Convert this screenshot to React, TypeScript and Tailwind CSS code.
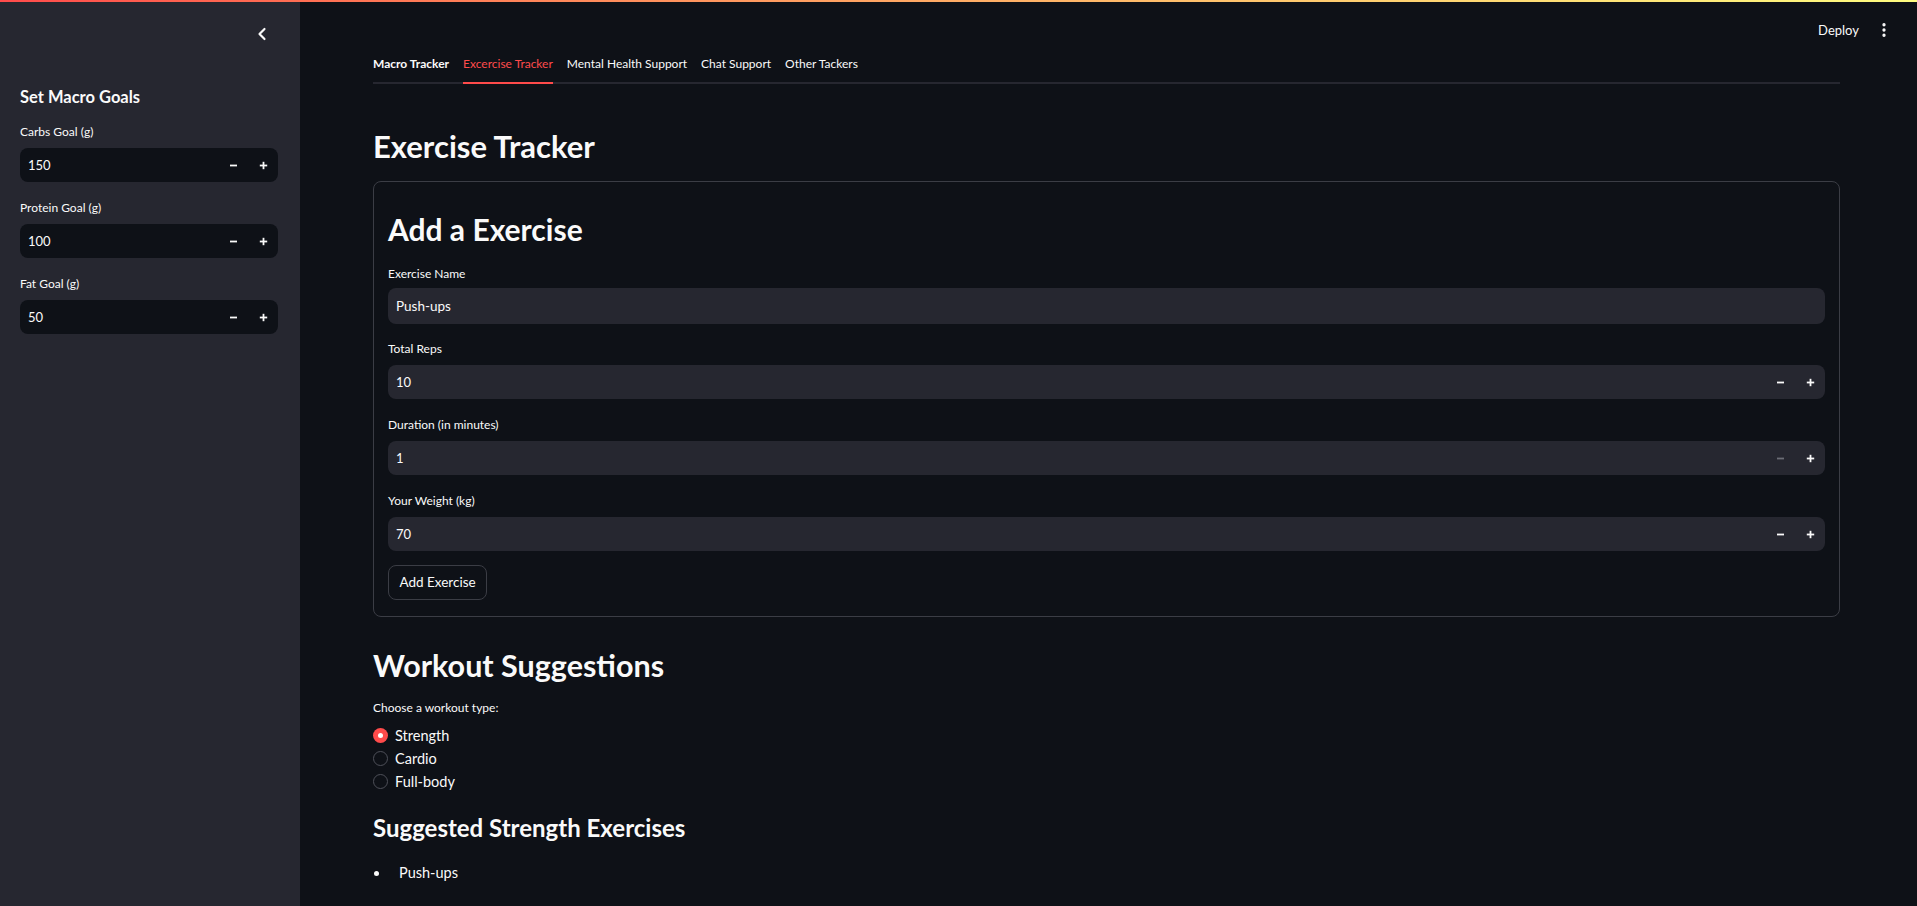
import React from "react";

const FONT = { fontFamily: "Lato, 'Noto Sans', sans-serif" };

function Minus({ dim }: { dim?: boolean }) {
  return (
    <svg width="9" height="9" viewBox="0 0 9 9">
      <line x1="1" y1="4.5" x2="8" y2="4.5" stroke={dim ? "#6b6d75" : "#fafafa"} strokeWidth="1.8" />
    </svg>
  );
}
function Plus() {
  return (
    <svg width="9" height="9" viewBox="0 0 9 9">
      <line x1="0.8" y1="4.5" x2="8.2" y2="4.5" stroke="#fafafa" strokeWidth="1.8" />
      <line x1="4.5" y1="0.8" x2="4.5" y2="8.2" stroke="#fafafa" strokeWidth="1.8" />
    </svg>
  );
}

function NumInput({ value, dark, minusDim }: { value: string; dark?: boolean; minusDim?: boolean }) {
  return (
    <div
      className={`flex h-[34px] items-center rounded-[8px] ${dark ? "bg-[#0e1117]" : "bg-[#262730]"}`}
    >
      <span className="flex-1 pl-[8px] text-[13px] leading-[20px] text-[#fafafa]">{value}</span>
      <span className="flex h-full w-[29px] items-center justify-center">
        <Minus dim={minusDim} />
      </span>
      <span className="flex h-full w-[30px] items-center justify-center">
        <Plus />
      </span>
    </div>
  );
}

function SideField({ label, value, last }: { label: string; value: string; last?: boolean }) {
  return (
    <div className={last ? "" : "mb-[16px]"}>
      <div className="h-[20px] text-[12px] leading-[20px]">{label}</div>
      <div className="mt-[6px]">
        <NumInput value={value} dark />
      </div>
    </div>
  );
}

function MainField({
  label,
  children,
  mb = "mb-[16px]",
  gap = "mt-[6px]",
}: {
  label: string;
  children: React.ReactNode;
  mb?: string;
  gap?: string;
}) {
  return (
    <div className={mb}>
      <div className="h-[20px] text-[12px] leading-[20px]">{label}</div>
      <div className={gap}>{children}</div>
    </div>
  );
}

function Radio({ label, checked }: { label: string; checked?: boolean }) {
  return (
    <div className="flex h-[23px] items-center">
      {checked ? (
        <span className="flex h-[15px] w-[15px] items-center justify-center rounded-full bg-[#ff4b4b]">
          <span className="h-[5px] w-[5px] rounded-full bg-white" />
        </span>
      ) : (
        <span className="h-[15px] w-[15px] rounded-full border border-[#4e5059]" />
      )}
      <span className="ml-[7px] text-[14.5px] leading-[20px]">{label}</span>
    </div>
  );
}

export default function App() {
  const tabs = ["Macro Tracker", "Excercise Tracker", "Mental Health Support", "Chat Support", "Other Tackers"];
  return (
    <div className="relative flex h-[906px] w-full overflow-hidden bg-[#0e1117] text-[#fafafa]" style={FONT}>
      <div className="absolute left-0 right-0 top-0 z-10 h-[2px] bg-linear-to-r from-[#ff4b4b] to-[#fffd80]" />

      <aside className="w-[300px] shrink-0 bg-[#262730] pl-[20px] pr-[22px]">
        <div className="flex h-[68px] items-center justify-end">
          <svg className="mr-[6px]" width="20" height="20" viewBox="0 0 24 24" fill="none" stroke="#fafafa" strokeWidth="2.6" strokeLinecap="round" strokeLinejoin="round">
            <path d="m15 18-6-6 6-6" />
          </svg>
        </div>
        <div className="mt-[17px] h-[24px] text-[16.5px] font-bold leading-[24px]">Set Macro Goals</div>
        <div className="mt-[13px]">
          <SideField label="Carbs Goal (g)" value="150" />
          <SideField label="Protein Goal (g)" value="100" />
          <SideField label="Fat Goal (g)" value="50" last />
        </div>
      </aside>

      <main className="relative flex-1 pl-[73px] pr-[77px] pt-[54px]">
        <div className="absolute right-[24px] top-0 flex h-[60px] items-center">
          <span className="text-[13px] leading-[20px]">Deploy</span>
          <svg className="ml-[16px]" width="18" height="18" viewBox="0 0 24 24" fill="none" stroke="#fafafa" strokeWidth="2.4" strokeLinecap="round">
            <circle cx="12" cy="5" r="1" />
            <circle cx="12" cy="12" r="1" />
            <circle cx="12" cy="19" r="1" />
          </svg>
        </div>

        <div className="flex gap-[14px] border-b-2 border-[#262730]">
          {tabs.map((t, i) => (
            <div
              key={t}
              className={
                i === 1
                  ? "-mb-[2px] border-b-2 border-[#ff4b4b] pb-[8px] text-[12px] leading-[20px] text-[#ff4b4b]"
                  : `pb-[8px] text-[12px] leading-[20px] ${i === 0 ? "font-bold" : ""}`
              }
            >
              {t}
            </div>
          ))}
        </div>

        <h1 className="mt-[42px] h-[40px] text-[31px] font-bold leading-[40px]">Exercise Tracker</h1>

        <div className="mt-[15px] rounded-[8px] border border-[#3b3d45] px-[14px] pb-[16px] pt-[27px]">
          <h2 className="h-[40px] text-[30px] font-bold leading-[40px]">Add a Exercise</h2>
          <div className="mt-[15px]">
            <MainField label="Exercise Name" mb="mb-[15px]" gap="mt-[4px]">
              <div className="flex h-[36px] items-center rounded-[8px] bg-[#262730] pl-[8px] text-[13.5px]">Push-ups</div>
            </MainField>
            <MainField label="Total Reps">
              <NumInput value="10" />
            </MainField>
            <MainField label="Duration (in minutes)">
              <NumInput value="1" minusDim />
            </MainField>
            <MainField label="Your Weight (kg)" mb="mb-[14px]">
              <NumInput value="70" />
            </MainField>
          </div>
          <button className="flex h-[35px] w-[99px] items-center justify-center rounded-[8px] border border-[#3b3d45] bg-[#0e1117] text-[13.5px] text-[#fafafa]">
            Add Exercise
          </button>
        </div>

        <h2 className="mt-[28px] h-[40px] text-[30.5px] font-bold leading-[40px]">Workout Suggestions</h2>
        <div className="mt-[13px] h-[20px] text-[12px] leading-[20px]">Choose a workout type:</div>
        <div className="mt-[6px]">
          <Radio label="Strength" checked />
          <Radio label="Cardio" />
          <Radio label="Full-body" />
        </div>

        <h3 className="mt-[19px] h-[32px] text-[24px] font-bold leading-[32px]">Suggested Strength Exercises</h3>
        <div className="mt-[17px] flex h-[24px] items-center">
          <span className="ml-[1px] h-[5px] w-[5px] rounded-full bg-[#fafafa]" />
          <span className="ml-[20px] text-[14.5px] leading-[24px]">Push-ups</span>
        </div>
      </main>
    </div>
  );
}
